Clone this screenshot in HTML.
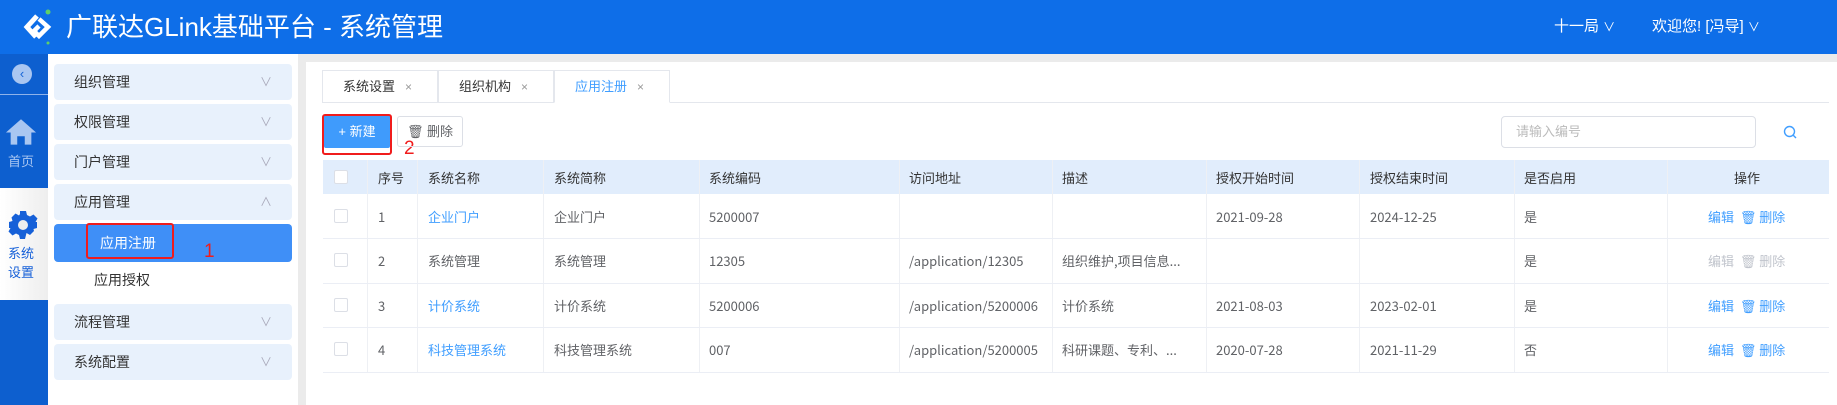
<!DOCTYPE html>
<html><head><meta charset="utf-8"><style>
*{margin:0;padding:0;box-sizing:border-box}
body{width:1837px;height:405px;overflow:hidden;background:#fff;font-family:"Liberation Sans","Noto Sans CJK SC",sans-serif;position:relative;color:#606266}
.a{position:absolute}
.hdr{left:0;top:0;width:1837px;height:54px;background:#0e6ee8}
.rail{left:0;top:54px;width:48px;height:351px;background:#0d5fcf}
.side{left:48px;top:54px;width:250px;height:351px;background:#fff}
.mi{position:absolute;left:6px;width:238px;height:36px;background:#e8f1fc;border-radius:4px;font-size:14px;color:#333;line-height:36px;padding-left:20px}
.mi .ch{position:absolute;right:20px;top:0;color:#aab;font-size:12px}
.gap{left:298px;top:54px;width:1539px;height:8px;background:#ebebeb}
.gap2{left:298px;top:54px;width:8px;height:351px;background:#ebebeb}
.tab{position:absolute;top:70px;height:33px;width:116px;border:1px solid #e4e7ed;font-size:13px;line-height:31px;padding-left:20px;color:#333;background:#fff}
.tab span{color:#999;font-size:12px;margin-left:10px}
.tr{position:absolute;left:0;width:1837px}
.tr div{position:absolute;top:0;height:100%;display:flex;align-items:center;font-size:13px;white-space:nowrap;font-family:"Noto Sans CJK SC","Liberation Sans",sans-serif}
.row{position:absolute;left:323px;width:1506px;height:1px;background:#ebeef5}
.cb{position:absolute;left:334px;width:14px;height:14px;border:1px solid #dcdfe6;background:#fff;border-radius:2px}
.vl{position:absolute;top:160px;width:1px;height:212px;background:#eef0f4}
.lk{color:#409eff}
.hd div{color:#333}
</style></head><body>
<div class="a hdr"></div>
<svg class="a" style="left:20px;top:8px" width="36" height="38" viewBox="0 0 36 38">
<path d="M17 8 L7 19 L16 29" stroke="#fff" stroke-width="5" fill="none"/>
<path d="M19 11 L28 19 L19 28 L14 23 L19 18" stroke="#fff" stroke-width="4.5" fill="none"/>
<circle cx="28" cy="4" r="2.5" fill="#5fd068"/><circle cx="28" cy="35" r="1.5" fill="#5fd068"/></svg>
<div class="a" style="left:66px;top:11px;font-size:26px;color:#fff;line-height:32px">广联达GLink基础平台 - 系统管理</div>
<div class="a" style="left:1554px;top:15px;font-size:15px;color:#fff">十一局 <span style="font-size:12px">∨</span></div>
<div class="a" style="left:1652px;top:15px;font-size:15px;color:#fff">欢迎您!&nbsp;[冯导] <span style="font-size:12px">∨</span></div>

<div class="a rail"></div>
<div class="a" style="left:12px;top:64px;width:20px;height:20px;border-radius:50%;background:#a9c6f1;color:#1463d6;font-size:13px;text-align:center;line-height:20px">‹</div>
<div class="a" style="left:0;top:94px;width:48px;height:1px;background:#8fb3ea"></div>
<svg class="a" style="left:5px;top:117px" width="32" height="29" viewBox="0 0 34 30"><path d="M17 2 L33 16 L28 16 L28 29 L21 29 L21 20 L13 20 L13 29 L6 29 L6 16 L1 16 Z" fill="#a9c6f1"/></svg>
<div class="a" style="left:8px;top:151px;font-size:13px;color:#a9c6f1">首页</div>
<div class="a" style="left:0;top:188px;width:48px;height:112px;background:linear-gradient(90deg,#fff,#eee)"></div>
<svg class="a" style="left:8px;top:210px" width="30" height="30" viewBox="0 0 30 30"><path fill="#1660d8" d="M12 1h6l1 4 3 1.5 3.5-2 4 4-2 3.5L29 12v6l-3.5 1L26 21l-4 4-3.5-2L18 25l-1 4h-5l-1-4-3-1.5-3.5 2-4-4 2-3.5L1 18v-6l3.5-1L3.5 7.5l4-4 3.5 2L12 4z"/><circle cx="15" cy="15" r="5" fill="#eee"/></svg>
<div class="a" style="left:8px;top:244px;font-size:13px;color:#1660d8;line-height:19px">系统<br>设置</div>

<div class="a side">
<div class="mi" style="top:10px">组织管理<span class="ch">∨</span></div>
<div class="mi" style="top:50px">权限管理<span class="ch">∨</span></div>
<div class="mi" style="top:90px">门户管理<span class="ch">∨</span></div>
<div class="mi" style="top:130px">应用管理<span class="ch">∧</span></div>
<div class="mi" style="top:170px;height:38px;background:#3f8ff7;color:#fff;padding-left:46px;line-height:38px">应用注册</div>
<div style="position:absolute;left:46px;top:216px;font-size:14px;color:#333">应用授权</div>
<div class="mi" style="top:250px">流程管理<span class="ch">∨</span></div>
<div class="mi" style="top:290px">系统配置<span class="ch">∨</span></div>
</div>
<div class="a" style="left:86px;top:223px;width:88px;height:36px;border:2px solid #f01c1c;border-radius:3px"></div>
<div class="a" style="left:204px;top:241px;font-size:19px;color:#f01c1c">1</div>

<div class="a gap"></div><div class="a gap2"></div>
<div class="tab" style="left:322px">系统设置<span>×</span></div>
<div class="tab" style="left:438px">组织机构<span>×</span></div>
<div class="tab" style="left:554px;color:#409eff;border-bottom-color:#fff">应用注册<span>×</span></div>
<div class="a" style="left:670px;top:102px;width:1159px;height:1px;background:#e4e7ed"></div>

<div class="a" style="left:324px;top:115px;width:66px;height:33px;background:#3f9bfc;color:#fff;font-size:13px;line-height:33px;text-align:center;border-radius:2px">+ 新建</div>
<div class="a" style="left:322px;top:114px;width:70px;height:41px;border:2px solid #f01c1c;border-radius:3px"></div>
<div class="a" style="left:404px;top:138px;font-size:19px;color:#f01c1c">2</div>
<div class="a" style="left:397px;top:116px;width:66px;height:31px;border:1px solid #dcdfe6;border-radius:3px;font-size:13px;line-height:29px;text-align:center;color:#606266">🗑︎ 删除</div>
<div class="a" style="left:1501px;top:116px;width:255px;height:32px;border:1px solid #dcdfe6;border-radius:4px;font-size:13px;color:#bbb;line-height:30px;padding-left:14px">请输入编号</div>
<svg class="a" style="left:1783px;top:125px" width="14" height="14" viewBox="0 0 14 14"><circle cx="6.5" cy="6.5" r="5" stroke="#409eff" stroke-width="1.4" fill="none"/><path d="M10 10 L13 13" stroke="#409eff" stroke-width="1.4"/></svg>

<div class="a" style="left:323px;top:160px;width:1506px;height:34px;background:#e1edfc"></div>
<div class="vl" style="left:367px"></div><div class="vl" style="left:417px"></div><div class="vl" style="left:543px"></div><div class="vl" style="left:699px"></div><div class="vl" style="left:899px"></div><div class="vl" style="left:1052px"></div><div class="vl" style="left:1206px"></div><div class="vl" style="left:1359px"></div><div class="vl" style="left:1514px"></div><div class="vl" style="left:1667px"></div>
<div class="row" style="top:238px"></div><div class="row" style="top:283px"></div><div class="row" style="top:327px"></div><div class="row" style="top:372px"></div>
<div class="cb" style="top:170px"></div><div class="cb" style="top:209px"></div><div class="cb" style="top:253px"></div><div class="cb" style="top:298px"></div><div class="cb" style="top:342px"></div>

<div class="tr hd" style="top:160px;height:34px">
<div style="left:378px">序号</div><div style="left:428px">系统名称</div><div style="left:554px">系统简称</div><div style="left:709px">系统编码</div><div style="left:909px">访问地址</div><div style="left:1062px">描述</div><div style="left:1216px">授权开始时间</div><div style="left:1370px">授权结束时间</div><div style="left:1524px">是否启用</div><div style="left:1734px">操作</div>
</div>
<div class="tr" style="top:194px;height:44px">
<div style="left:378px">1</div><div class="lk" style="left:428px">企业门户</div><div style="left:554px">企业门户</div><div style="left:709px">5200007</div><div style="left:1216px">2021-09-28</div><div style="left:1370px">2024-12-25</div><div style="left:1524px">是</div><div class="lk" style="left:1708px">编辑 &nbsp;🗑︎ 删除</div>
</div>
<div class="tr" style="top:238px;height:45px">
<div style="left:378px">2</div><div style="left:428px">系统管理</div><div style="left:554px">系统管理</div><div style="left:709px">12305</div><div style="left:909px">/application/12305</div><div style="left:1062px">组织维护,项目信息...</div><div style="left:1524px">是</div><div style="left:1708px;color:#c0c4cc">编辑 &nbsp;🗑︎ 删除</div>
</div>
<div class="tr" style="top:283px;height:44px">
<div style="left:378px">3</div><div class="lk" style="left:428px">计价系统</div><div style="left:554px">计价系统</div><div style="left:709px">5200006</div><div style="left:909px">/application/5200006</div><div style="left:1062px">计价系统</div><div style="left:1216px">2021-08-03</div><div style="left:1370px">2023-02-01</div><div style="left:1524px">是</div><div class="lk" style="left:1708px">编辑 &nbsp;🗑︎ 删除</div>
</div>
<div class="tr" style="top:327px;height:45px">
<div style="left:378px">4</div><div class="lk" style="left:428px">科技管理系统</div><div style="left:554px">科技管理系统</div><div style="left:709px">007</div><div style="left:909px">/application/5200005</div><div style="left:1062px">科研课题、专利、...</div><div style="left:1216px">2020-07-28</div><div style="left:1370px">2021-11-29</div><div style="left:1524px">否</div><div class="lk" style="left:1708px">编辑 &nbsp;🗑︎ 删除</div>
</div>
</body></html>
